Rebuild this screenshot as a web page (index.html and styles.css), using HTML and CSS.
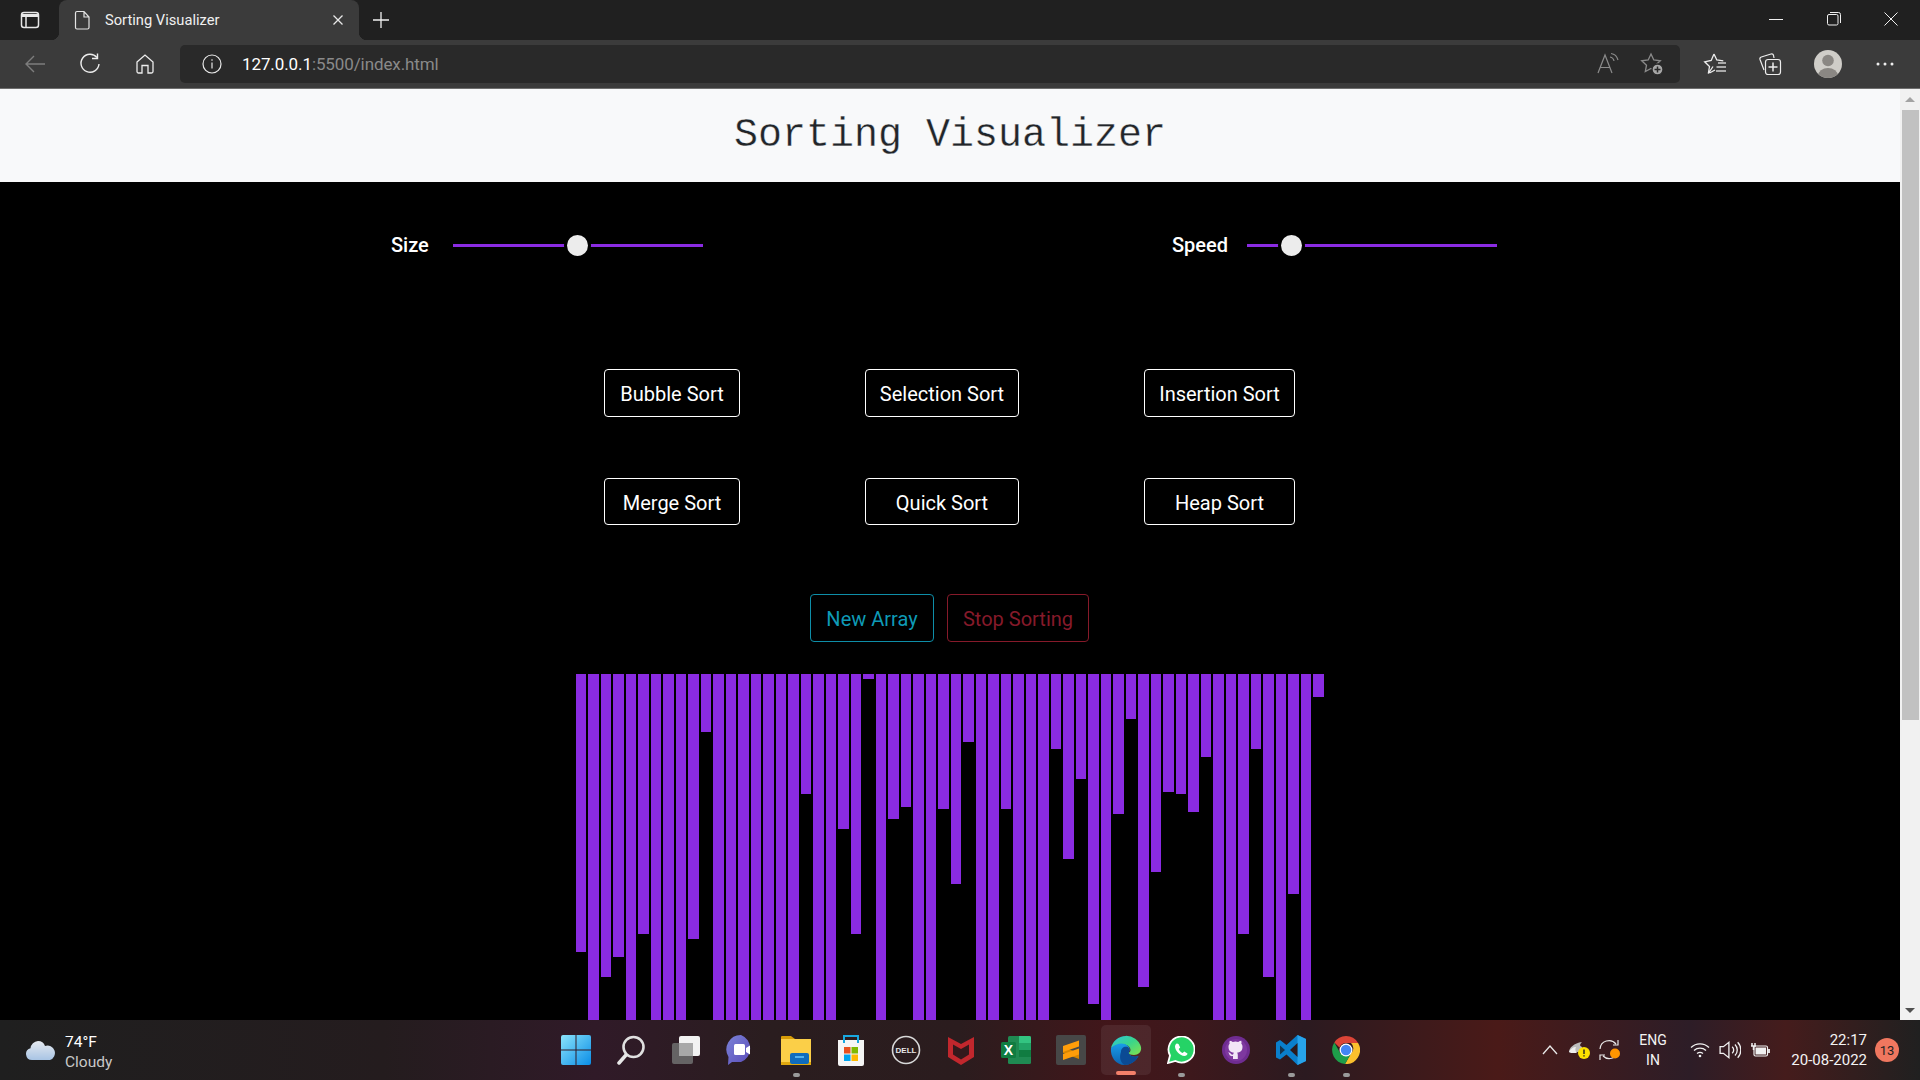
FILE: index.html
```html
<!DOCTYPE html>
<html lang="en">
<head>
<meta charset="utf-8">
<title>Sorting Visualizer</title>
<link rel="stylesheet" href="styles.css">
</head>
<body>
<div class="screen">
  <div class="tabstrip">
    <div class="tab-side">
      <svg width="20" height="20" viewBox="0 0 20 20" fill="none" stroke="#e8e8e8" stroke-width="1.5"><rect x="1.5" y="2.5" width="17" height="15" rx="2.5"/><path d="M2 5.500h16" stroke-width="3"/><path d="M6 6v11"/></svg>
    </div>
    <div class="tab">
      <svg class="tab-page" width="20" height="22" viewBox="0 0 20 22" fill="none" stroke="#e4e4e4" stroke-width="1.2"><path d="M4 2.500h7l5 5.500v10.500a1.500 1.500 0 0 1-1.500 1.500H4a1.500 1.500 0 0 1-1.500-1.500v-14.500A1.500 1.500 0 0 1 4 2.500zM11 2.500V8h5"/></svg>
      <span class="tab-title">Sorting Visualizer</span>
      <svg class="tab-close" width="12" height="12" viewBox="0 0 12 12" stroke="#e8e8e8" stroke-width="1.300"><path d="M1.500 1.500l9 9M10.500 1.500l-9 9"/></svg>
    </div>
    <div class="tab-new">
      <svg width="18" height="18" viewBox="0 0 18 18" stroke="#f0f0f0" stroke-width="1.300"><path d="M9 1v16M1 9h16"/></svg>
    </div>
    <div class="win-controls">
      <div class="win-btn"><svg width="14" height="14" viewBox="0 0 14 14" stroke="#f0f0f0" stroke-width="1"><path d="M0 7.500h14"/></svg></div>
      <div class="win-btn"><svg width="14" height="14" viewBox="0 0 14 14" fill="none" stroke="#f0f0f0" stroke-width="1"><rect x=".5" y="2.500" width="10.500" height="10.500" rx="1.500"/><path d="M3 .5h8.500a2 2 0 0 1 2 2V11"/></svg></div>
      <div class="win-btn"><svg width="14" height="14" viewBox="0 0 14 14" stroke="#f0f0f0" stroke-width="1"><path d="M.5.500l13 13M13.500.500l-13 13"/></svg></div>
    </div>
  </div>

  <div class="toolbar">
    <div class="tool"><svg width="22" height="20" viewBox="0 0 22 20" fill="none" stroke="#7d7d7d" stroke-width="1.400"><path d="M21 10H2M10 2l-8 8 8 8"/></svg></div>
    <div class="tool"><svg width="22" height="22" viewBox="0 0 22 22" fill="none" stroke="#ededed" stroke-width="1.400"><path d="M18 4.500A9 9 0 1 0 20 11"/><path d="M18.500 .5v5h-5.500"/></svg></div>
    <div class="tool"><svg width="20" height="22" viewBox="0 0 20 22" fill="none" stroke="#ededed" stroke-width="1.300"><path d="M2 9l8-7 8 7v9.500a1.500 1.500 0 0 1-1.500 1.500H13v-7.500H7V20H3.500A1.500 1.500 0 0 1 2 18.500z"/></svg></div>
    <div class="address">
      <svg class="addr-info" width="20" height="20" viewBox="0 0 20 20" fill="none" stroke="#e8e8e8" stroke-width="1.200"><circle cx="10" cy="10" r="9"/><path d="M10 8.500v6M10 5.200v1.600"/></svg>
      <span class="url"><span class="url-host">127.0.0.1</span>:5500/index.html</span>
      <div class="addr-tools">
        <svg width="24" height="24" viewBox="0 0 24 24" fill="none" stroke="#8b8b8b" stroke-width="1.200"><path d="M1 21L8 3l7 18M3.500 15.500h9"/><path d="M13 5c2 .3 3.500 1.500 4 4M14 1.500c3.800.5 6 2.800 7 6.500"/></svg>
        <svg width="24" height="24" viewBox="0 0 24 24" fill="none" stroke="#8b8b8b" stroke-width="1.300"><path d="M11 2l2.800 6 6.500.8-4.800 4.400 1.200 6.400-5.700-3.200-5.700 3.200 1.200-6.400L1.700 8.800 8.200 8z"/><circle cx="17.500" cy="17.500" r="5.500" fill="#a8a8a8" stroke="#292929"/><path d="M17.500 14.500v6M14.500 17.500h6" stroke="#292929" stroke-width="1.500"/></svg>
      </div>
    </div>
    <div class="tool tool-w55"><svg width="24" height="24" viewBox="0 0 24 24" fill="none" stroke="#ededed" stroke-width="1.300"><path d="M11 2l2.800 6 6.500.8M10 14.500l-4.700 7 1.200-7L1.700 9.800 8.200 8.500 11 2M6.500 21l5.500-3"/><path d="M15 11h8M13.500 15h9.500M13 19h10" stroke="#d0d0d0"/></svg></div>
    <div class="tool tool-w55"><svg width="24" height="24" viewBox="0 0 24 24" fill="none" stroke="#ededed" stroke-width="1.200"><path d="M6 18L2 7.500a2 2 0 0 1 1.300-2.500L13 2a2 2 0 0 1 2.500 1.300L16 6"/><rect x="7.500" y="7.500" width="15" height="15" rx="2.500"/><path d="M15 10.500v9M10.500 15h9" stroke-width="1.500"/></svg></div>
    <div class="tool tool-w61">
      <svg width="28" height="28" viewBox="0 0 28 28"><defs><clipPath id="pf"><circle cx="14" cy="14" r="14"/></clipPath></defs><circle cx="14" cy="14" r="14" fill="#cfcdc8"/><g clip-path="url(#pf)" fill="#8a8783"><circle cx="14" cy="10.500" r="5.800"/><ellipse cx="14" cy="26" rx="10" ry="8"/></g></svg>
    </div>
    <div class="tool tool-w54"><svg width="18" height="4" viewBox="0 0 18 4" fill="#ededed"><circle cx="2" cy="2" r="1.500"/><circle cx="9" cy="2" r="1.500"/><circle cx="16" cy="2" r="1.500"/></svg></div>
  </div>

  <div class="viewport">
    <main class="page">
      <header class="page-head"><h1 class="page-title">Sorting Visualizer</h1></header>
      <section class="controls">
        <div class="control control-size"><label class="control-label" for="size">Size</label><input class="slider" id="size" type="range" min="0" max="100" step="0.1" value="49.6"></div>
        <div class="control control-speed"><label class="control-label" for="speed">Speed</label><input class="slider" id="speed" type="range" min="0" max="100" value="15"></div>
      </section>
      <section class="algos">
        <button class="btn">Bubble Sort</button>
        <button class="btn">Selection Sort</button>
        <button class="btn">Insertion Sort</button>
        <button class="btn">Merge Sort</button>
        <button class="btn">Quick Sort</button>
        <button class="btn">Heap Sort</button>
      </section>
      <section class="actions">
        <button class="btn btn-info">New Array</button>
        <button class="btn btn-stop">Stop Sorting</button>
      </section>
      <section class="bars">
        <div class="bar" style="height:278px"></div><div class="bar" style="height:400px"></div><div class="bar" style="height:303px"></div><div class="bar" style="height:283px"></div><div class="bar" style="height:400px"></div><div class="bar" style="height:260px"></div><div class="bar" style="height:400px"></div><div class="bar" style="height:400px"></div><div class="bar" style="height:400px"></div><div class="bar" style="height:265px"></div>
        <div class="bar" style="height:58px"></div><div class="bar" style="height:400px"></div><div class="bar" style="height:400px"></div><div class="bar" style="height:400px"></div><div class="bar" style="height:400px"></div><div class="bar" style="height:400px"></div><div class="bar" style="height:400px"></div><div class="bar" style="height:400px"></div><div class="bar" style="height:120px"></div><div class="bar" style="height:400px"></div>
        <div class="bar" style="height:400px"></div><div class="bar" style="height:155px"></div><div class="bar" style="height:260px"></div><div class="bar" style="height:5px"></div><div class="bar" style="height:400px"></div><div class="bar" style="height:145px"></div><div class="bar" style="height:133px"></div><div class="bar" style="height:400px"></div><div class="bar" style="height:400px"></div><div class="bar" style="height:135px"></div>
        <div class="bar" style="height:210px"></div><div class="bar" style="height:68px"></div><div class="bar" style="height:400px"></div><div class="bar" style="height:400px"></div><div class="bar" style="height:135px"></div><div class="bar" style="height:400px"></div><div class="bar" style="height:400px"></div><div class="bar" style="height:400px"></div><div class="bar" style="height:75px"></div><div class="bar" style="height:185px"></div>
        <div class="bar" style="height:105px"></div><div class="bar" style="height:330px"></div><div class="bar" style="height:400px"></div><div class="bar" style="height:140px"></div><div class="bar" style="height:45px"></div><div class="bar" style="height:313px"></div><div class="bar" style="height:198px"></div><div class="bar" style="height:118px"></div><div class="bar" style="height:120px"></div><div class="bar" style="height:138px"></div>
        <div class="bar" style="height:83px"></div><div class="bar" style="height:400px"></div><div class="bar" style="height:400px"></div><div class="bar" style="height:260px"></div><div class="bar" style="height:75px"></div><div class="bar" style="height:303px"></div><div class="bar" style="height:400px"></div><div class="bar" style="height:220px"></div><div class="bar" style="height:400px"></div><div class="bar" style="height:23px"></div>
      </section>
    </main>
    <div class="scrollbar">
      <div class="sb-btn"><span class="sb-up"></span></div>
      <div class="sb-thumb"></div>
      <div class="sb-track"></div>
      <div class="sb-btn sb-btn-end"><span class="sb-down"></span></div>
    </div>
  </div>

  <footer class="taskbar">
    <div class="weather">
      <svg width="30" height="20" viewBox="0 0 30 20"><defs><linearGradient id="cl" x1="0" y1="0" x2="0" y2="1"><stop offset="0" stop-color="#e6eaf0"/><stop offset="1" stop-color="#a8c4e4"/></linearGradient></defs><path d="M6 20a6 6 0 0 1-1.500-11.800A8 8 0 0 1 12 1a7.500 7.500 0 0 1 7 5 6.500 6.500 0 0 1 5 14z" fill="url(#cl)"/></svg>
      <div class="weather-text"><span class="weather-temp">74°F</span><span class="weather-desc">Cloudy</span></div>
    </div>
    <div class="tb-icons">
      <div class="tb-item"><svg width="30" height="30" viewBox="0 0 30 30"><defs><linearGradient id="w" x1="0" y1="0" x2="1" y2="1"><stop offset="0" stop-color="#8be4fb"/><stop offset="1" stop-color="#0a8de6"/></linearGradient></defs><path d="M2 0h12.500v14.500H0V2a2 2 0 0 1 2-2zM15.500 0H28a2 2 0 0 1 2 2v12.500H15.500zM0 15.500h14.500V30H2a2 2 0 0 1-2-2zM15.500 15.500H30V28a2 2 0 0 1-2 2H15.500z" fill="url(#w)"/></svg></div>
      <div class="tb-item"><svg width="30" height="30" viewBox="0 0 30 30" fill="none"><circle cx="17.500" cy="12" r="10" stroke="#e0e0e0" stroke-width="2.600"/><path d="M10 20L3 28" stroke="#e8e8e8" stroke-width="3.500" stroke-linecap="round"/></svg></div>
      <div class="tb-item"><svg width="30" height="30" viewBox="0 0 30 30"><rect x="8" y="1" width="21" height="20" rx="2" fill="#f2f2f2"/><rect x="1" y="8" width="21" height="21" rx="2" fill="#6b6b6b" fill-opacity=".9"/><rect x="8" y="8" width="14" height="13" fill="#a8a8a8"/></svg></div>
      <div class="tb-item"><svg width="30" height="30" viewBox="0 0 30 30"><defs><linearGradient id="tm" x1="0" y1="0" x2="1" y2="1"><stop offset="0" stop-color="#7b83d8"/><stop offset="1" stop-color="#5a4bb8"/></linearGradient></defs><path d="M15 0a14.500 14.500 0 0 1 0 27H6l-4 3 .5-8A14.500 14.500 0 0 1 15 0z" fill="url(#tm)"/><rect x="8" y="9" width="11" height="11" rx="1.500" fill="#fff"/><path d="M20 13l4-2.500v9L20 17z" fill="#fff"/></svg></div>
      <div class="tb-item tb-run"><svg width="30" height="30" viewBox="0 0 30 30"><path d="M0 2a1 1 0 0 1 1-1h9l4 3h-14z" fill="#d79c08"/><path d="M0 4h30v25a1 1 0 0 1-1 1H1a1 1 0 0 1-1-1z" fill="#fbcf48"/><rect x="0" y="27" width="30" height="3" fill="#e0a80f"/><rect x="9" y="18" width="19" height="11" rx="2" fill="#0f6cbd"/><rect x="14" y="21" width="9" height="2" fill="#4fb0ee"/></svg></div>
      <div class="tb-item"><svg width="30" height="32" viewBox="0 0 30 32"><path d="M2 6h26v24a2 2 0 0 1-2 2H4a2 2 0 0 1-2-2z" fill="#f5f5f5"/><path d="M8 9V2h14v7" fill="none" stroke="#18a8e0" stroke-width="2"/><rect x="8" y="13" width="6.500" height="6.500" fill="#e8501f"/><rect x="15.500" y="13" width="6.500" height="6.500" fill="#7fb900"/><rect x="8" y="20.500" width="6.500" height="6.500" fill="#00a4ef"/><rect x="15.500" y="20.500" width="6.500" height="6.500" fill="#fdb900"/></svg></div>
      <div class="tb-item"><svg width="30" height="30" viewBox="0 0 30 30" fill="none"><circle cx="15" cy="15" r="13.500" stroke="#d8d8d8" stroke-width="1.600"/><text class="dell" x="15" y="18" text-anchor="middle">DELL</text></svg></div>
      <div class="tb-item"><svg width="26" height="30" viewBox="0 0 26 30"><path d="M0 2l13 7 13-7v20l-13 8-13-8z" fill="#c1272d"/><path d="M5 9.500l8 4.500 8-4.500v10l-8 5-8-5z" fill="#33191c"/></svg></div>
      <div class="tb-item"><svg width="30" height="30" viewBox="0 0 30 30"><rect x="7" y="1" width="23" height="28" rx="1.500" fill="#1f8a52"/><path d="M18 1h10.500A1.500 1.500 0 0 1 30 2.500V8H18z" fill="#33c481"/><rect x="18" y="8" width="12" height="7" fill="#21a366"/><rect x="18" y="15" width="12" height="7" fill="#107c41"/><rect y="7" width="15" height="16" rx="1.500" fill="#107c41"/><text class="xl" x="7.500" y="20" text-anchor="middle">X</text></svg></div>
      <div class="tb-item"><svg width="30" height="30" viewBox="0 0 30 30"><rect width="30" height="30" rx="2" fill="#474747"/><path d="M7 12l16 6v6L7 18z" fill="#d98600"/><path d="M7 11l16-5.500v6L7 17zM7 19l16-5.500v6L7 25z" fill="#ff9d0a"/></svg></div>
      <div class="tb-item tb-active"><svg width="32" height="32" viewBox="0 0 32 32"><defs><linearGradient id="e1" x1="0" y1="0" x2="1" y2="1"><stop offset="0" stop-color="#2dc3e0"/><stop offset=".5" stop-color="#3ad58a"/><stop offset="1" stop-color="#85e24a"/></linearGradient><linearGradient id="e2" x1="0" y1="0" x2="0" y2="1"><stop offset="0" stop-color="#1a9ce8"/><stop offset="1" stop-color="#0d63b0"/></linearGradient></defs><path d="M1 14A15.500 15.500 0 0 1 31 13c1 5-3 8-7 8-3 0-5-1-5.500-2 2-1 2.500-3 1.500-5C18 10 10 8 1 14z" fill="url(#e1)"/><path d="M1 14c5-5 13-6 17-2 2 2 2 4 .5 7 1 3 6 5 10 3-3 6-9 9-14 9C6 31 0 23 1 14z" fill="url(#e2)"/><path d="M11 18c0-4 3-6 7-5 1 1 2 3 .5 6 1 3 6 5 10 3-3 6-9 9-14 9-5-3-5-9-3.500-13z" fill="#0b4a94"/></svg></div>
      <div class="tb-item tb-run"><svg width="28" height="28" viewBox="0 0 28 28"><path d="M1 27l2-7.500A13 13 0 1 1 8.500 25z" fill="#25d366" stroke="#fff" stroke-width="1.800"/><path d="M10 7.500c-1 0-2 1.500-2 3 0 4 5 9.500 9.500 9.500 1.500 0 3-1 3-2.500l-3.300-2-1.500 1.500c-1.500-.5-3.500-2.500-4-4l1.500-1.500L11.500 8z" fill="#fff"/></svg></div>
      <div class="tb-item"><svg width="28" height="28" viewBox="0 0 28 28"><circle cx="14" cy="14" r="14" fill="#6f2c91"/><circle cx="14" cy="14" r="11" fill="#8e44ad" fill-opacity=".5"/><path d="M11 23v-3c-3 .7-3.700-1.500-4-2.500-.4-.7-1-1-1-1h1c1 0 1.500 1 2 1.500.8 1 2 .7 2.200.3 0-.7.400-1.300.8-1.600-3-.4-5.500-1.500-5.500-6 0-1.200.5-2.300 1.200-3-.2-.5-.4-1.600.1-3 1.400 0 2.600.9 3 1.300a10 10 0 0 1 5.400 0c.4-.4 1.600-1.300 3-1.300.5 1.400.3 2.500.1 3 .7.700 1.200 1.800 1.200 3 0 4.500-2.500 5.600-5.500 6 .5.400.8 1.200.8 2.100V23z" fill="#f2e6f7"/></svg></div>
      <div class="tb-item tb-run"><svg width="30" height="30" viewBox="0 0 30 30"><path d="M21.500 0L30 4v22l-8.500 4-11-10.500-6.500 5L0 22.500V7.500L4 5l6.500 5z" fill="#0a7fcc"/><path d="M21.500 0L30 4v22l-8.500 4V0z" fill="#27a3ea"/><path d="M4 10.500v9l5-4.500z" fill="#1a1519" fill-opacity=".7"/><path d="M21.500 8L14 15l7.500 7z" fill="#2c1a1d"/></svg></div>
      <div class="tb-item tb-run"><svg width="28" height="28" viewBox="0 0 28 28"><path d="M14 0a14 14 0 0 1 12.100 7H14a7 7 0 0 0-6.500 4.500L2.300 6.500A14 14 0 0 1 14 0z" fill="#db4437"/><path d="M26.100 7A14 14 0 0 1 13 28l6-10.500a7 7 0 0 0 0-10.500z" fill="#fbc02d"/><path d="M13 28A14 14 0 0 1 2.300 6.500L8.500 17.500a7 7 0 0 0 10.500 0z" fill="#1e9e4a"/><circle cx="14" cy="14" r="6.500" fill="#fff"/><circle cx="14" cy="14" r="5.200" fill="#4285f4"/></svg></div>
    </div>
    <div class="tray">
      <div class="tray-item tray-28"><svg width="16" height="10" viewBox="0 0 16 10" fill="none" stroke="#e8e8e8" stroke-width="1.300"><path d="M1 9l7-8 7 8"/></svg></div>
      <div class="tray-item tray-28 tray-cloud"><svg width="24" height="20" viewBox="0 0 24 20"><path d="M1 12c0-4 5-9 13-10-3 3-2 4 0 5v5H3a2 2 0 0 1-2 0z" fill="#bcbcbc"/><path d="M1 12c1-3 4-5 7-5-1 2-1 4 1 6H3z" fill="#eee"/><circle cx="16" cy="13" r="6" fill="#fce100"/><path d="M16 9.500v4.500M16 15.200v1.400" stroke="#222" stroke-width="1.400"/></svg></div>
      <div class="tray-item tray-36"><svg width="22" height="22" viewBox="0 0 22 22" fill="none" stroke="#e8e8e8" stroke-width="1.200"><path d="M1 10A9 9 0 0 1 17 5M19 1v5h-5"/><path d="M19 13A9 9 0 0 1 4 17M1 21v-5h5"/><circle cx="16" cy="14.500" r="5" fill="#ff9500" stroke="none"/></svg></div>
      <div class="lang"><span>ENG</span><span>IN</span></div>
      <div class="tray-item tray-44"><svg width="20" height="16" viewBox="0 0 20 16" fill="none" stroke="#f0f0f0" stroke-width="1.300"><path d="M1 5.500a13 13 0 0 1 18 0M4 8.500a9 9 0 0 1 12 0M7 11.500a5 5 0 0 1 6 0"/><circle cx="10" cy="14" r="1.300" fill="#f0f0f0" stroke="none"/></svg></div>
      <div class="tray-item tray-16"><svg class="vol" width="20" height="18" viewBox="0 0 20 18" fill="none" stroke="#f0f0f0" stroke-width="1.200"><path d="M1 6v6h3l5 4V2L4 6z"/><path d="M12 6a4 4 0 0 1 0 6M14.500 4a7 7 0 0 1 0 10M17 2a10 10 0 0 1 0 14"/></svg></div>
      <div class="tray-item tray-44"><svg width="20" height="16" viewBox="0 0 20 16" fill="none" stroke="#f0f0f0" stroke-width="1.200"><rect x="4" y="4" width="13.500" height="10" rx="1.500"/><path d="M19 7v4" stroke-width="1.800"/><rect x="5.500" y="5.500" width="10.500" height="7" fill="#f0f0f0" stroke="none"/><path d="M2 1v3M5 1v3M1 4h5M3.500 4v4" stroke-width="1.500"/></svg></div>
      <div class="clock"><span>22:17</span><span>20-08-2022</span></div>
      <div class="notif">13</div>
    </div>
  </footer>
</div>
</body>
</html>
```
FILE: styles.css
```css
* { box-sizing: border-box; }
html, body { margin: 0; height: 100%; overflow: hidden; }
body { font-family: "Open Sans", "Noto Sans", sans-serif; background: #000; color: #fff; }
.screen { display: flex; flex-direction: column; height: 100vh; }

/* browser tab strip */
.tabstrip { display: flex; align-items: stretch; height: 40px; background: #202020; flex: none; }
.tab-side { width: 59px; display: flex; align-items: center; justify-content: center; }
.tab { position: relative; width: 300px; display: flex; align-items: center; background: #3b3b3b; border-radius: 8px 8px 0 0; padding: 0 15px 0 14px; }
.tab::before, .tab::after { content: ""; position: absolute; bottom: 0; width: 8px; height: 8px; }
.tab::before { left: -8px; background: radial-gradient(circle at 0 0, #202020 8px, #3b3b3b 8.500px); }
.tab::after { right: -8px; background: radial-gradient(circle at 100% 0, #202020 8px, #3b3b3b 8.500px); }
.tab-page { flex: none; margin-right: 12px; }
.tab-title { flex: 1; font-family: Roboto, sans-serif; font-size: 14.700px; color: #f0f0f0; white-space: nowrap; }
.tab-close { flex: none; }
.tab-new { width: 44px; display: flex; align-items: center; justify-content: center; }
.win-controls { margin-left: auto; display: flex; padding-right: 0; }
.win-btn { width: 57.500px; display: flex; align-items: center; justify-content: center; padding-bottom: 2px; }

/* browser toolbar */
.toolbar { display: flex; align-items: center; height: 49px; flex: none; padding: 0 8px 1px 7px; background: #3b3b3b; border-bottom: 1px solid #6e6e6e; }
.tool { width: 55px; height: 38px; flex: none; display: flex; align-items: center; justify-content: center; }
.tool-w55 { width: 55px; }
.tool-w61 { width: 61px; }
.tool-w54 { width: 54px; }
.address { flex: 1; height: 38px; margin: 0 7px 0 8px; display: flex; align-items: center; background: #292929; border-radius: 5px; padding: 0 16px 0 22px; }
.addr-info { flex: none; margin-right: 20px; }
.url { font-family: Roboto, sans-serif; font-size: 17px; letter-spacing: -.1px; color: #8a8a8a; white-space: nowrap; }
.url-host { color: #fff; }
.addr-tools { margin-left: auto; display: flex; gap: 19px; align-items: center; }

/* viewport */
.viewport { flex: 1; min-height: 0; display: flex; }
.page { flex: 1; min-width: 0; overflow: hidden; background: #000; }
.page-head { height: 93px; background: #f8f9fa; display: flex; align-items: center; justify-content: center; }
.page-title { margin: 0; font-family: "Liberation Mono", monospace; font-size: 40px; font-weight: 400; color: #212529; line-height: 1; -webkit-text-stroke: .35px #f8f9fa; }

.controls { display: flex; padding: 48px 0 0 391px; gap: 469px; height: 78px; }
.control { display: flex; align-items: center; height: 30px; }
.control-label { font-family: Roboto, sans-serif; font-size: 20px; font-weight: 500; color: #fff; }
.control-size .control-label { width: 62px; }
.control-speed .control-label { width: 74.500px; }
.slider { -webkit-appearance: none; appearance: none; width: 250px; height: 21px; margin: 0; background: transparent; display: block; }
.slider::-webkit-slider-runnable-track { height: 3px; background: #8a2be2; }
.slider::-webkit-slider-thumb { -webkit-appearance: none; appearance: none; width: 21px; height: 21px; margin-top: -9px; border-radius: 50%; background: #ececec; box-shadow: 0 0 0 3px #000; }

.algos { display: grid; grid-template-columns: 136px 154px 151px; grid-template-rows: 48px 47px; gap: 61px 125px; justify-content: center; margin: 109px 1px 0 0; }
.btn { background: transparent; border: 1px solid #fff; border-radius: 4px; color: #fff; font-family: Roboto, sans-serif; font-size: 20px; padding: 2px 0 0; margin: 0; }
.actions { display: flex; justify-content: center; gap: 13px; margin: 69px 1px 0 0; height: 48px; }
.btn-info { width: 124px; color: #0e9ab6; border-color: #0e8ea8; }
.btn-stop { width: 142px; color: #861a2a; border-color: #861a2a; }

.bars { display: flex; justify-content: center; align-items: flex-start; margin-top: 32px; padding-right: .3px; height: 400px; }
.bar { width: 10.500px; margin: 0 1px; flex: none; background: #8a2be2; }

/* scrollbar */
.scrollbar { width: 20px; flex: none; display: flex; flex-direction: column; align-items: center; background: #f1f1f1; }
.sb-btn { height: 21px; width: 100%; display: flex; align-items: center; justify-content: center; flex: none; }
.sb-btn-end { height: 20px; }
.sb-up { width: 0; height: 0; border: 5px solid transparent; border-top: 0; border-bottom: 5px solid #a3a3a3; }
.sb-down { width: 0; height: 0; border: 5px solid transparent; border-bottom: 0; border-top: 5px solid #505050; }
.sb-thumb { width: 17px; height: 610px; background: #c1c1c1; flex: none; }
.sb-track { flex: 1; }

/* taskbar */
.taskbar { height: 60px; flex: none; display: grid; grid-template-columns: 1fr auto 1fr; align-items: center; background: linear-gradient(90deg, #1f1f1f 0, #241c1e 20%, #301a28 31%, #2a1d1f 40%, #2b1c1e 50%, #42161a 58%, #3d181c 62%, #2b1a20 68%, #4a1a18 78%, #2d1d27 88%, #451c1c 93%, #202020 100%); }
.weather { display: flex; align-items: center; padding-left: 26px; }
.weather-text { display: flex; flex-direction: column; margin-left: 9px; font-family: Roboto, sans-serif; font-size: 15.500px; line-height: 20px; padding-top: 3px; }
.weather-temp { color: #fff; }
.weather-desc { color: #c8c8c8; }
.tb-icons { display: flex; gap: 5px; padding-left: 2px; }
.tb-item { position: relative; width: 50px; height: 50px; display: flex; align-items: center; justify-content: center; border-radius: 5px; }
.tb-run::after { content: ""; position: absolute; left: 21.500px; bottom: -2px; width: 7px; height: 4px; border-radius: 2px; background: #9a9a9a; }
.tb-active { background: rgba(255, 255, 255, .07); }
.tb-active::after { content: ""; position: absolute; left: 15px; bottom: 0; width: 20px; height: 4px; border-radius: 2px; background: #f4806a; }
.dell { font-family: "Liberation Sans", sans-serif; font-size: 8px; font-weight: 700; fill: #e8e8e8; }
.xl { font-family: "Liberation Sans", sans-serif; font-size: 14px; font-weight: 700; fill: #fff; }

.tray { display: flex; justify-content: flex-end; align-items: center; padding-right: 21px; }
.tray-item { display: flex; align-items: center; justify-content: center; height: 40px; flex: none; }
.tray-28 { width: 28px; }
.tray-cloud { padding-left: 4px; }
.tray-36 { width: 36px; }
.tray-44 { width: 44px; }
.tray-16 { width: 16px; }
.vol { flex: none; width: 22px; height: 20px; }
.lang, .clock { display: flex; flex-direction: column; font-family: Roboto, sans-serif; font-size: 14px; line-height: 20px; color: #f4f4f4; flex: none; }
.lang { width: 50px; align-items: center; }
.clock { width: 85px; align-items: flex-end; font-size: 15px; white-space: nowrap; }
.notif { width: 24px; height: 24px; margin-left: 8px; flex: none; border-radius: 50%; background: #f0775f; color: #1f1f1f; font-family: Roboto, sans-serif; font-size: 13px; display: flex; align-items: center; justify-content: center; }
```
